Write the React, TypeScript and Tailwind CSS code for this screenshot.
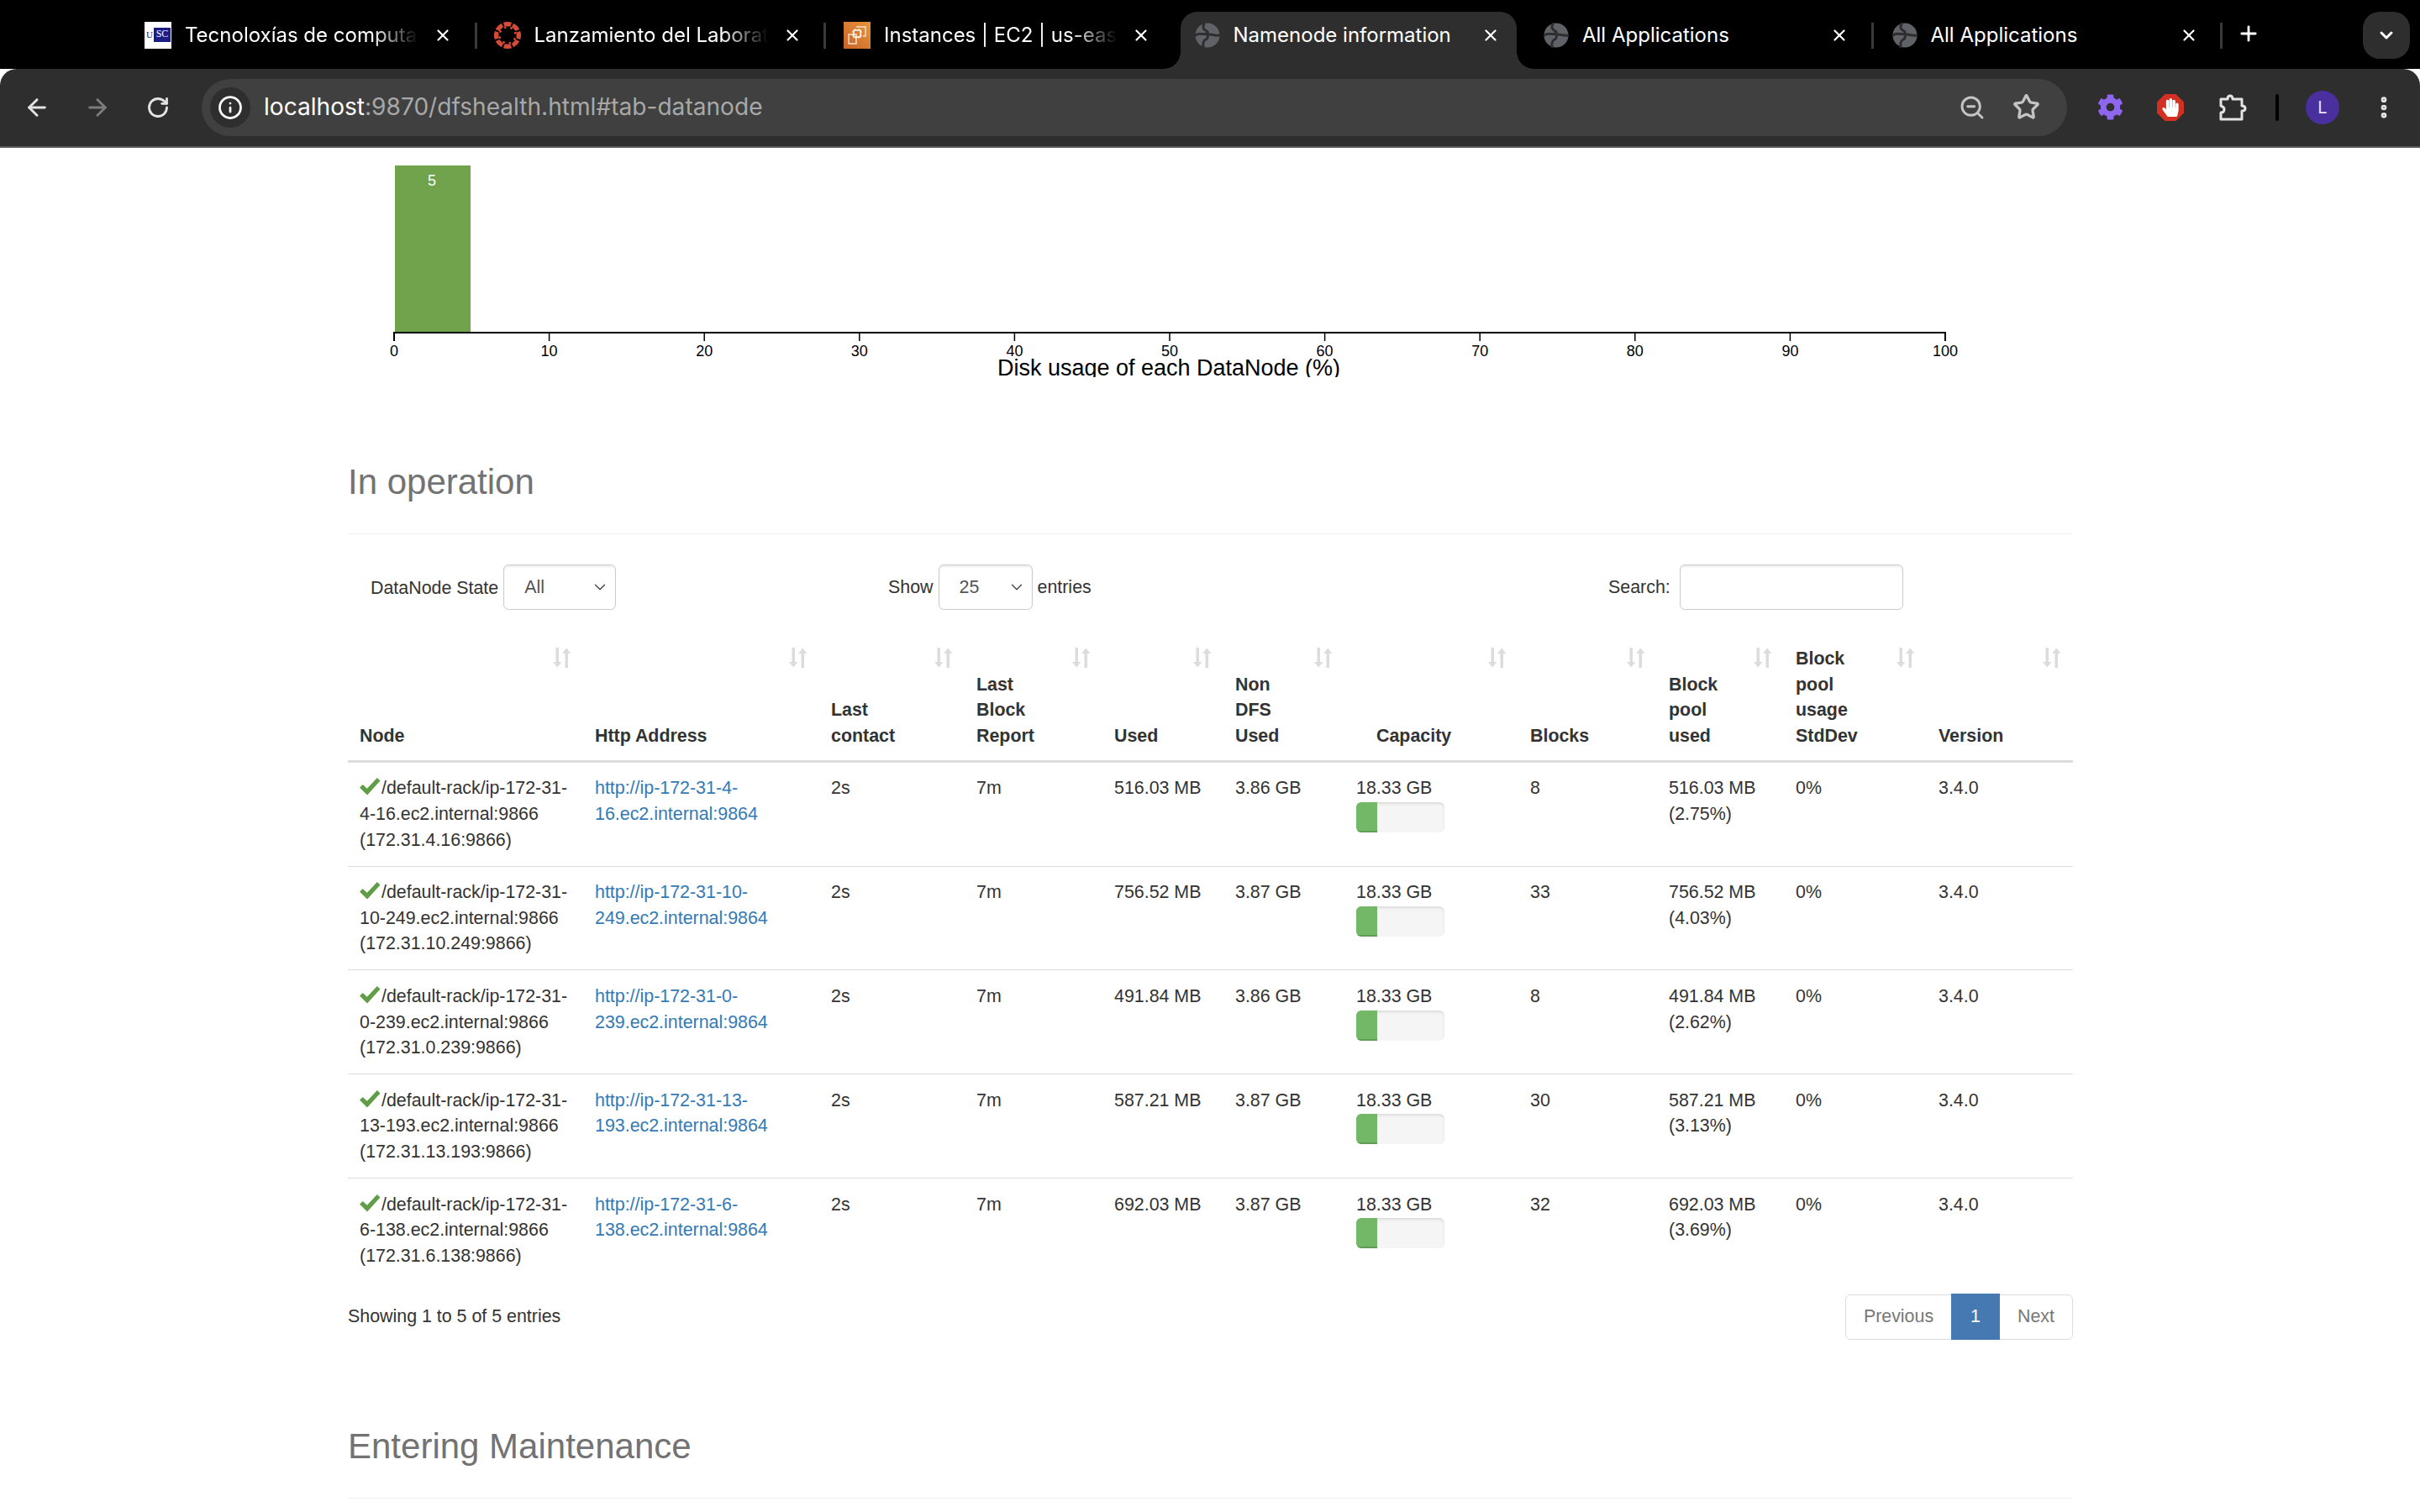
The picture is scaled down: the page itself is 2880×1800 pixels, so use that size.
import { ArrowLeft, ArrowRight, EllipsisVertical, Info, Plus, RotateCw, Star, X, ZoomOut, ChevronDown } from "lucide-react";
import { FaCog, FaHandPaper } from "react-icons/fa";

const sans = "font-['Liberation_Sans',Arial,sans-serif]";

function Globe() {
  return (
    <svg width="30" height="30" viewBox="0 0 30 30" className="shrink-0">
      <circle cx="15" cy="15" r="14.5" fill="#5f6368" />
      <path d="M11 1.500C9 5 10 8 13 9.500c3 1.200 3 3.500 0 4C9 14 4 12 1 15M10 28.500c-.5-4 0-7 3-8.500 3-1.500 3-5 1-6 4-1 10 2 15 1" fill="none" stroke="#2e2e2e" strokeWidth="3" strokeLinecap="round" />
    </svg>
  );
}

function CanvasIcon() {
  const dots = [0, 45, 90, 135, 180, 225, 270, 315];
  return (
    <svg width="32" height="32" viewBox="-16 -16 32 32" className="shrink-0">
      {dots.map((a) => (
        <g key={a} transform={`rotate(${a})`}>
          <path d="M-5 -15.200 A16 16 0 0 1 5 -15.200 L3.500 -10.500 L-3.500 -10.500 Z" fill="#d64b38" />
          <circle cx="4.500" cy="-8.500" r="1.400" fill="#d64b38" />
        </g>
      ))}
    </svg>
  );
}

function UscIcon() {
  return (
    <div className="w-8 h-8 bg-white shrink-0 flex items-start justify-center pt-[7px]">
      <div className="flex h-[17px] w-[30px] leading-none font-['Liberation_Serif',serif] text-[11px] text-[#1c1c82]">
        <span className="w-[10px] text-center pt-[3px]">U</span>
        <span className="flex-1 bg-[#1c1c82] text-white text-center pt-[1px] text-[12px]">SC</span>
      </div>
    </div>
  );
}

function Ec2Icon() {
  return (
    <svg width="32" height="32" viewBox="0 0 32 32" className="shrink-0">
      <defs>
        <linearGradient id="ec2" x1="0" y1="1" x2="1" y2="0">
          <stop offset="0" stopColor="#c8632a" />
          <stop offset="1" stopColor="#e8963a" />
        </linearGradient>
      </defs>
      <rect width="32" height="32" fill="url(#ec2)" />
      <path d="M15 6h11v11h-3M6 15h9v11H6z" fill="none" stroke="#f6e2d0" strokeWidth="1.500" />
      <rect x="12" y="10" width="8" height="8" fill="none" stroke="#fff" strokeWidth="1.500" />
      <path d="M14 8v2M18 8v2M14 18v2M18 18v2M10 12h2M10 16h2M20 12h2M20 16h2" stroke="#fff" strokeWidth="1" />
    </svg>
  );
}

function PuzzleIcon() {
  return (
    <svg width="34" height="36" viewBox="0 0 34 36" fill="none" stroke="#e3e3e3" strokeWidth="3">
      <path d="M3 8h8c0-2 .5-4 3-4s3 2 3 4h11v8c2 0 4 .5 4 3s-2 3-4 3v10H3v-8c3 0 4-2 4-4s-1-3-4-4z" strokeLinejoin="round" />
    </svg>
  );
}

function StopIcon() {
  return (
    <div className="relative w-8 h-8 flex items-center justify-center">
      <svg width="32" height="32" viewBox="0 0 32 32" className="absolute inset-0">
        <path d="M9.500 0h13L32 9.500v13L22.500 32h-13L0 22.500v-13z" fill="#d32f23" />
      </svg>
      <FaHandPaper className="relative text-white" size={22} />
    </div>
  );
}

function Tab({ icon, title, active, noSep, pad, cut }: { icon: React.ReactNode; title: string; active?: boolean; noSep?: boolean; pad: string; cut?: boolean }) {
  return (
    <div className="relative h-[68px] w-[415.500px] shrink-0 flex items-start">
      {active ? (
        <>
          <div className="absolute left-[7px] right-[8px] top-0 bottom-0 bg-[#2e2e2e] rounded-t-[20px]" />
          <div className="absolute left-[-13px] bottom-0 w-5 h-5 bg-[radial-gradient(circle_at_0_0,#000_19.500px,#2e2e2e_20px)]" />
          <div className="absolute right-[-12px] bottom-0 w-5 h-5 bg-[radial-gradient(circle_at_100%_0,#000_19.500px,#2e2e2e_20px)]" />
        </>
      ) : null}
      <div className={`relative flex items-center h-[32px] mt-[12px] ${pad}`}>
        {icon}
        <span className={`ml-[16px] w-[278px] whitespace-nowrap overflow-hidden text-[24px] leading-[32px] text-white font-['Inter',sans-serif] ${cut ? "[mask-image:linear-gradient(to_right,black_80%,transparent_100%)]" : ""}`}>
          {title}
        </span>
      </div>
      <X className="absolute left-[365px] top-[17px] text-white" size={22} strokeWidth={2.400} />
      {!noSep ? <div className="absolute right-[-1px] top-[13px] w-[3px] h-[31px] bg-[#3a3a3a]" /> : null}
    </div>
  );
}

function SortIcon() {
  return (
    <svg width="22" height="24" viewBox="0 0 22 24" className="absolute right-[14px] top-[2px]" fill="#dcdcdc">
      <path d="M3.500 0h3.500v17h3.500L5.200 23.500 0 17h3.500z" />
      <path d="M14.500 24h3.500V7h3.500L16.200.500 11 7h3.500z" />
    </svg>
  );
}

function Check() {
  return (
    <svg width="25" height="21" viewBox="0 0 25 21" className="inline-block align-[-2px] mr-[1px] -mt-[12px]" fill="#5f9e46">
      <path d="M0 11.500 3.800 8l5 4.800L20.800 0 24.500 3.500 9 20.500z" />
    </svg>
  );
}

const headers: { lines: string[]; width: number; extra?: string }[] = [
  { lines: ["Node"], width: 280 },
  { lines: ["Http Address"], width: 281 },
  { lines: ["Last", "contact"], width: 173 },
  { lines: ["Last", "Block", "Report"], width: 164 },
  { lines: ["Used"], width: 144 },
  { lines: ["Non", "DFS", "Used"], width: 144 },
  { lines: ["Capacity"], width: 207, extra: "pl-[38px]" },
  { lines: ["Blocks"], width: 165 },
  { lines: ["Block", "pool", "used"], width: 151 },
  { lines: ["Block", "pool", "usage", "StdDev"], width: 170 },
  { lines: ["Version"], width: 174 },
];

const rows = [
  { a: "4-16", b: "172.31.4.16", h: ["http://ip-172-31-4-", "16.ec2.internal:9864"], used: "516.03 MB", non: "3.86 GB", blocks: "8", pct: "2.75%" },
  { a: "10-249", b: "172.31.10.249", h: ["http://ip-172-31-10-", "249.ec2.internal:9864"], used: "756.52 MB", non: "3.87 GB", blocks: "33", pct: "4.03%" },
  { a: "0-239", b: "172.31.0.239", h: ["http://ip-172-31-0-", "239.ec2.internal:9864"], used: "491.84 MB", non: "3.86 GB", blocks: "8", pct: "2.62%" },
  { a: "13-193", b: "172.31.13.193", h: ["http://ip-172-31-13-", "193.ec2.internal:9864"], used: "587.21 MB", non: "3.87 GB", blocks: "30", pct: "3.13%" },
  { a: "6-138", b: "172.31.6.138", h: ["http://ip-172-31-6-", "138.ec2.internal:9864"], used: "692.03 MB", non: "3.87 GB", blocks: "32", pct: "3.69%" },
];

const ticks = [0, 10, 20, 30, 40, 50, 60, 70, 80, 90, 100];

function Chart() {
  return (
    <svg width="2880" height="273" viewBox="0 176 2880 273" className="block" fontFamily="'Liberation Sans', Arial, sans-serif">
      <rect x="470" y="197" width="90" height="199" fill="#70a34c" />
      <text x="514" y="221" textAnchor="middle" fontSize="18" fontWeight="500" fill="#fff">5</text>
      <path d="M469 406V396H2315V406" fill="none" stroke="#000" strokeWidth="2" />
      {ticks.map((t) => (
        <g key={t}>
          <line x1={469 + t * 18.46} x2={469 + t * 18.46} y1="396" y2="406" stroke="#000" strokeWidth="1.500" />
          <text x={469 + t * 18.46} y="424" textAnchor="middle" fontSize="18" fill="#000">{t}</text>
        </g>
      ))}
      <text x="1391" y="447" textAnchor="middle" fontSize="27" fill="#000">Disk usage of each DataNode (%)</text>
    </svg>
  );
}

function Select({ value, width }: { value: string; width: string }) {
  return (
    <div className={`${width} h-[54px] flex items-center justify-between pl-[24px] pr-[7px] border-[1.500px] border-[#ccc] rounded-[6px] shadow-[inset_0_2px_2px_rgba(0,0,0,0.075)] text-[#555]`}>
      <span>{value}</span>
      <ChevronDown size={22} strokeWidth={1.500} className="text-[#444]" />
    </div>
  );
}

export default function App() {
  return (
    <div className={`w-[2880px] h-[1800px] overflow-hidden bg-white flex flex-col ${sans}`}>
      <div className="h-[82px] bg-black flex pt-[14px] pl-[151px] relative shrink-0">
        <Tab icon={<UscIcon />} pad="pl-[21px]" cut title="Tecnoloxías de computación" />
        <Tab icon={<CanvasIcon />} pad="pl-[21px]" cut title="Lanzamiento del Laboratorio" />
        <Tab icon={<Ec2Icon />} pad="pl-[22px]" cut noSep title="Instances | EC2 | us-east-1" />
        <Tab icon={<Globe />} pad="pl-[24px]" noSep title="Namenode information" active />
        <Tab icon={<Globe />} pad="pl-[24px]" title="All Applications" />
        <Tab icon={<Globe />} pad="pl-[23px]" title="All Applications" />
        <Plus className="absolute left-[2662px] top-[26px] text-white" size={28} strokeWidth={2.400} />
        <div className="absolute left-[2812px] top-[14px] w-[56px] h-[56px] rounded-[20px] bg-[#2e2e2e] flex items-center justify-center">
          <ChevronDown className="text-white" size={24} strokeWidth={3} />
        </div>
      </div>

      <div className="h-[94px] shrink-0 bg-[#2e2e2e] border-b-2 border-[#5a5a5a] rounded-t-[20px] flex items-center pl-[28px] text-[#e3e3e3] pb-[1px]">
        <ArrowLeft size={32} strokeWidth={2.200} />
        <ArrowRight size={32} strokeWidth={2.200} className="ml-[40px] text-[#7c7c7c]" />
        <RotateCw size={28} strokeWidth={2.400} className="ml-[42px]" />
        <div className="ml-[38px] w-[2220px] h-[68px] rounded-full bg-[#404040] flex items-center pl-[10px] pr-[32px]">
          <div className="w-[48px] h-[48px] rounded-full bg-[#2e2e2e] flex items-center justify-center shrink-0">
            <Info size={30} strokeWidth={2.200} className="text-white" />
          </div>
          <div className="ml-[16px] flex-1 text-[28.100px] font-['Inter',sans-serif] text-[#a8a8a8] leading-none">
            <span className="text-white">localhost</span>:9870/dfshealth.html#tab-datanode
          </div>
          <ZoomOut size={32} strokeWidth={2.200} className="text-[#c4c4c4]" />
          <Star size={33} strokeWidth={2.400} className="ml-[32px] text-[#c4c4c4]" />
        </div>
        <FaCog size={31} className="ml-[36px] text-[#8f66ee]" />
        <div className="ml-[40px]"><StopIcon /></div>
        <div className="ml-[41px]"><PuzzleIcon /></div>
        <div className="ml-[34px] w-[4px] h-[32px] rounded-full bg-black" />
        <div className="ml-[32px] w-10 h-10 rounded-full bg-[#4a2f9e] flex items-center justify-center text-[#e8e0ff] text-[20px] font-['Inter',sans-serif]">L</div>
        <EllipsisVertical size={32} strokeWidth={3} className="ml-[37px] text-[#e3e3e3]" />
      </div>

      <Chart />

      <div className="ml-[414px] w-[2053px] flex-1 text-[21.400px] leading-[30.600px] text-[#333]">
        <div className="mt-[102px] pb-[38px] border-b-[1.500px] border-[#eee] text-[42px] leading-[46px] text-[#737373]">In operation</div>

        <div className="mt-[36px] h-[54px] flex items-center">
          <div className="w-[643px] pl-[27px] flex items-center gap-[6px]">
            <span className="pt-[3px]">DataNode State</span>
            <Select value="All" width="w-[134px]" />
          </div>
          <div className="w-[857px] flex items-center gap-[6px]">
            <span>Show</span>
            <Select value="25" width="w-[112px]" />
            <span>entries</span>
          </div>
          <div className="flex items-center gap-[11px]">
            <span>Search:</span>
            <div className="w-[266px] h-[54px] border-[1.500px] border-[#ccc] rounded-[6px] shadow-[inset_0_2px_2px_rgba(0,0,0,0.075)]" />
          </div>
        </div>

        <table className="mt-[43px] w-[2053px] table-fixed border-collapse">
          <colgroup>
            {headers.map((h, i) => (
              <col key={i} span={1} width={h.width} />
            ))}
          </colgroup>
          <thead>
            <tr className="border-b-[3px] border-[#ddd]">
              {headers.map((h, i) => (
                <th key={i} className={`relative align-bottom text-left font-bold pb-[13.500px] px-[14px] ${h.extra ?? ""}`}>
                  {h.lines.map((l) => (
                    <div key={l}>{l}</div>
                  ))}
                  <SortIcon />
                </th>
              ))}
            </tr>
          </thead>
          <tbody>
            {rows.map((r) => (
              <tr key={r.a} className="border-b-[1.500px] border-[#ddd] last:border-b-0 align-top">
                <td className="px-[14px] py-[15.500px]">
                  <Check />/default-rack/ip-172-31-
                  <br />
                  {r.a}.ec2.internal:9866
                  <br />({r.b}:9866)
                </td>
                <td className="px-[14px] py-[15.500px] text-[#337ab7]">
                  {r.h[0]}
                  <br />
                  {r.h[1]}
                </td>
                <td className="px-[14px] py-[15.500px]">2s</td>
                <td className="px-[14px] py-[15.500px]">7m</td>
                <td className="px-[14px] py-[15.500px] whitespace-nowrap">{r.used}</td>
                <td className="px-[14px] py-[15.500px]">{r.non}</td>
                <td className="px-[14px] py-[15.500px]">
                  18.33 GB
                  <div className="w-[105px] h-[36px] mt-[1px] rounded-[6px] overflow-hidden bg-[#f5f5f5] shadow-[inset_0_2px_3px_rgba(0,0,0,0.1)]">
                    <div className="w-[25px] h-full bg-[#72b866] shadow-[inset_0_-2px_0_rgba(0,0,0,0.15)]" />
                  </div>
                </td>
                <td className="px-[14px] py-[15.500px]">{r.blocks}</td>
                <td className="px-[14px] py-[15.500px] whitespace-nowrap">
                  {r.used}
                  <br />({r.pct})
                </td>
                <td className="px-[14px] py-[15.500px]">0%</td>
                <td className="px-[14px] py-[15.500px]">3.4.0</td>
              </tr>
            ))}
          </tbody>
        </table>

        <div className="mt-[15px] flex items-center justify-between">
          <span>Showing 1 to 5 of 5 entries</span>
          <div className="flex h-[54px] items-stretch border-[1.500px] border-[#ddd] rounded-[6px] text-[#777]">
            <span className="w-[125px] flex items-center justify-center">Previous</span>
            <span className="w-[58px] -my-[1.500px] bg-[#4679b2] text-white flex items-center justify-center">1</span>
            <span className="w-[86px] flex items-center justify-center">Next</span>
          </div>
        </div>

        <div className="mt-[104px] pb-[38px] border-b-[1.500px] border-[#eee] text-[42px] leading-[46px] text-[#737373]">Entering Maintenance</div>
      </div>
    </div>
  );
}
